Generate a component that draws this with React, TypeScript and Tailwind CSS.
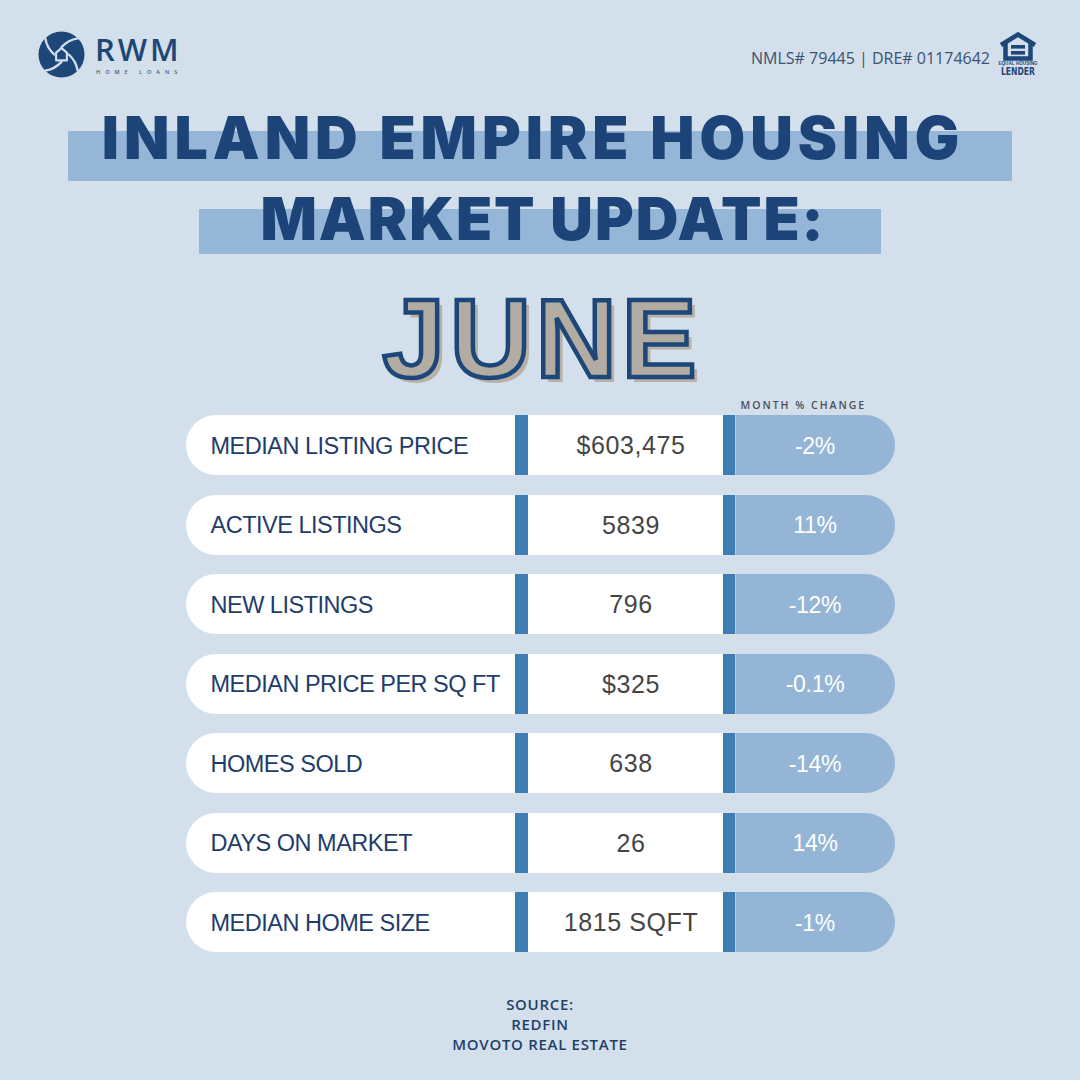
import React from "react";

const rows = [
  { label: "MEDIAN LISTING PRICE", value: "$603,475", change: "-2%" },
  { label: "ACTIVE LISTINGS", value: "5839", change: "11%" },
  { label: "NEW LISTINGS", value: "796", change: "-12%" },
  { label: "MEDIAN PRICE PER SQ FT", value: "$325", change: "-0.1%" },
  { label: "HOMES SOLD", value: "638", change: "-14%" },
  { label: "DAYS ON MARKET", value: "26", change: "14%" },
  { label: "MEDIAN HOME SIZE", value: "1815 SQFT", change: "-1%" },
];

function RwmLogo() {
  const blade = "M24 16.5 Q31 9 40.5 7.5";
  return (
    <svg width="47" height="47" viewBox="0 0 48 48">
      <circle cx="24" cy="24" r="23.5" fill="#1d4679" />
      {[0, 90, 180, 270].map((a) => (
        <path
          key={a}
          d={blade}
          transform={`rotate(${a} 24 24)`}
          stroke="#d3dfea"
          strokeWidth="2.4"
          fill="none"
          strokeLinecap="round"
        />
      ))}
      <path d="M18.5 22 L24 17.5 L29.5 22 L29.5 30 L18.5 30 Z" fill="#1d4679" stroke="#d3dfea" strokeWidth="2.2" strokeLinejoin="round" />
    </svg>
  );
}

function EhlLogo() {
  return (
    <div className="flex flex-col items-center w-[40px]">
      <svg width="40" height="29" viewBox="0 0 40 29">
        <path d="M3 13 L20 2.5 L37 13" stroke="#1d4679" strokeWidth="4.5" fill="none" strokeLinejoin="miter" />
        <path d="M7.5 11 L7.5 26.5 L32.5 26.5 L32.5 11" stroke="#1d4679" strokeWidth="4.5" fill="none" />
        <rect x="13" y="13" width="14" height="3.6" fill="#1d4679" />
        <rect x="13" y="19" width="14" height="3.6" fill="#1d4679" />
      </svg>
      <span className="text-[4.5px] leading-[6px] font-bold text-[#1d4679] tracking-[0.1px] whitespace-nowrap [font-family:'Liberation_Sans',sans-serif]">
        EQUAL HOUSING
      </span>
      <span className="text-[10px] leading-[10px] font-bold text-[#1d4679] scale-x-[0.85] [font-family:'DejaVu_Sans_Condensed','Liberation_Sans',sans-serif]">
        LENDER
      </span>
    </div>
  );
}

export default function App() {
  return (
    <div className="w-[1080px] h-[1080px] bg-[#d3dfea] overflow-hidden flex flex-col [font-family:'Liberation_Sans',Arial,sans-serif]">
      {/* header */}
      <div className="h-[108px] flex justify-between items-start pl-[38px] pr-[42px] pt-[31px]">
        <div className="flex items-center gap-[10px]">
          <RwmLogo />
          <div className="flex flex-col items-start">
            <span className="text-[31px] leading-[32px] font-semibold tracking-[3px] text-[#1d4679] [font-family:'Open_Sans',sans-serif]">
              RWM
            </span>
            <span className="text-[5.5px] leading-[8px] tracking-[5px] text-[#3a5a86] font-semibold mt-[3px] pl-[1px] [font-family:'Open_Sans',sans-serif]">
              HOME LOANS
            </span>
          </div>
        </div>
        <div className="flex items-center gap-[8px] mt-[1px]">
          <span className="text-[16px] text-[#3a5275] [font-family:'Open_Sans',sans-serif] mt-[6px]">
            NMLS# 79445 | DRE# 01174642
          </span>
          <EhlLogo />
        </div>
      </div>

      {/* title line 1 */}
      <div className="relative h-[73px] flex justify-center">
        <div className="absolute left-[68px] right-[68px] top-[23px] h-[50px] bg-[#95b6d6]" />
        <span className="relative text-[59px] leading-[60px] font-black tracking-[5px] text-[#1c4478] [font-family:Inter,sans-serif] pr-[14px]">
          INLAND EMPIRE HOUSING
        </span>
      </div>

      {/* title line 2 */}
      <div className="relative h-[65px] mt-[8px] flex justify-center">
        <div className="absolute left-[199px] w-[682px] top-[20px] h-[45px] bg-[#95b6d6]" />
        <span className="relative text-[59px] leading-[60px] font-black tracking-[2px] text-[#1c4478] [font-family:Inter,sans-serif] pl-[6px]">
          MARKET UPDATE:
        </span>
      </div>

      {/* JUNE */}
      <div className="mt-[29px] h-[112px] flex justify-center">
        <span className="text-[112px] leading-[112px] font-bold tracking-[5px] text-[#b3aca3] [font-family:'Liberation_Sans',Arial,sans-serif] [-webkit-text-stroke:4.5px_#1d4679] [text-shadow:5px_5px_0_#b8b1a8] pl-[4px]">
          JUNE
        </span>
      </div>

      {/* table */}
      <div className="w-[709px] mx-auto flex flex-col">
        <div className="h-[20px] grid grid-cols-[329px_13px_195px_13px_159px] items-center">
          <div className="col-start-5 pl-[5px] text-[10.5px] leading-[12px] font-semibold tracking-[2px] text-[#4a4f58] whitespace-nowrap [font-family:'Open_Sans',sans-serif]">
            MONTH % CHANGE
          </div>
        </div>
        <div className="flex flex-col gap-[19.5px]">
          {rows.map((r) => (
            <div key={r.label} className="grid grid-cols-[329px_13px_195px_13px_159px] h-[60px]">
              <div className="bg-white rounded-l-full flex items-center pl-[25px] pt-[3px] text-[23.5px] tracking-[-0.5px] text-[#1f3d6b] whitespace-nowrap">
                {r.label}
              </div>
              <div className="bg-[#3e7eb3]" />
              <div className="bg-white flex items-center justify-center pl-[12px] pt-[2px] text-[25px] tracking-[0.6px] text-[#454545] whitespace-nowrap">
                {r.value}
              </div>
              <div className="bg-[#3e7eb3] border-r border-white/60" />
              <div className="bg-[#94b5d5] rounded-r-full flex items-center justify-center pt-[2px] text-white text-[23px] tracking-[-0.3px]">
                {r.change}
              </div>
            </div>
          ))}
        </div>
      </div>

      {/* source */}
      <div className="mt-[42px] flex flex-col items-center text-[15px] leading-[20px] font-semibold tracking-[0.7px] text-[#1f3f6b] [font-family:'Open_Sans',sans-serif]">
        <span>SOURCE:</span>
        <span>REDFIN</span>
        <span>MOVOTO REAL ESTATE</span>
      </div>
    </div>
  );
}
